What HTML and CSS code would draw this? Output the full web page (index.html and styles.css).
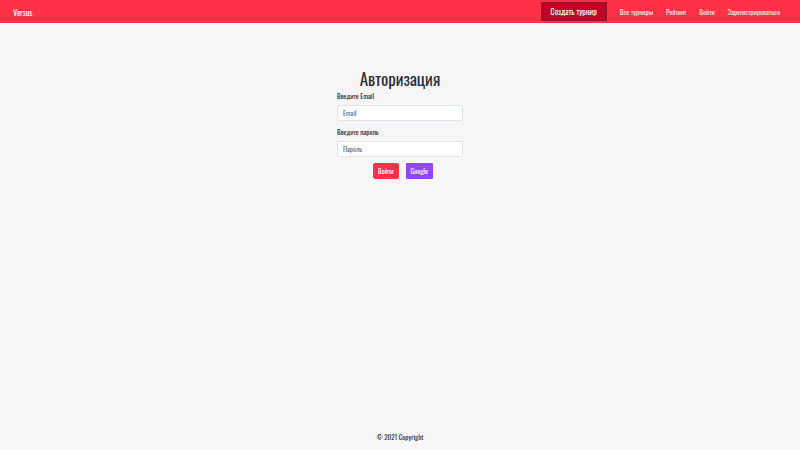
FILE: index.html
```html
<!DOCTYPE html>
<html lang="ru">
<head>
<meta charset="utf-8">
<meta name="viewport" content="width=device-width, initial-scale=1">
<title>Versus</title>
<link rel="stylesheet" href="styles.css">
</head>
<body>
<header class="navbar">
  <a class="brand" href="#">Versus</a>
  <nav class="nav">
    <a class="create" href="#">Создать турнир</a>
    <a class="nav-link" href="#">Все турниры</a>
    <a class="nav-link" href="#">Рейтинг</a>
    <a class="nav-link" href="#">Войти</a>
    <a class="nav-link" href="#">Зарегистрироваться</a>
  </nav>
</header>
<main class="main">
  <form class="login">
    <h1 class="title">Авторизация</h1>
    <div class="field">
      <label for="email">Введите Email</label>
      <input id="email" type="email" placeholder="Email">
    </div>
    <div class="field">
      <label for="password">Введите пароль</label>
      <input id="password" type="password" placeholder="Пароль">
    </div>
    <div class="actions">
      <button class="btn btn-login" type="submit">Войти</button>
      <button class="btn btn-google" type="button">Google</button>
    </div>
  </form>
</main>
<footer class="footer">© 2021 Copyright</footer>
</body>
</html>
```
FILE: styles.css
```css
* {
  box-sizing: border-box;
}

body {
  display: flex;
  flex-direction: column;
  min-height: 100vh;
  margin: 0;
  background: #f6f6f6;
  color: #2f2f3d;
  font-family: Oswald, "Liberation Sans Narrow", "Roboto Condensed", "Liberation Sans", sans-serif;
  font-size: 7px;
  line-height: 10px;
}

.navbar {
  display: flex;
  align-items: center;
  justify-content: space-between;
  padding: 2px 20px 2px 13px;
  background: #ff3148;
}

.brand,
.nav-link,
.create {
  color: #fff;
  text-decoration: none;
}

.brand {
  font-size: 8px;
}

.nav {
  display: flex;
  align-items: center;
  gap: 13px;
}

.nav-link {
  color: #ffe3e6;
}

.create {
  padding: 4px 9px;
  border: 1px solid #93142b;
  background: #bf0029;
  font-size: 8px;
  line-height: 9px;
}

.main {
  flex: 1;
  padding-top: 46px;
}

.login {
  width: 126px;
  margin: 0 auto;
}

.title {
  margin: 0 0 2px;
  font-size: 17px;
  font-weight: 400;
  line-height: 20px;
  text-align: center;
  white-space: nowrap;
}

.field {
  display: flex;
  flex-direction: column;
  gap: 4px;
  margin-bottom: 6px;
}

.field input {
  width: 100%;
  height: 16px;
  padding: 0 5px;
  border: 1px solid #e2e6ea;
  border-radius: 2px;
  background: #fff;
  color: #495057;
  font: inherit;
}

.field input::placeholder {
  color: #6c757d;
  opacity: 1;
}

.actions {
  display: flex;
  justify-content: center;
  gap: 7px;
  padding-left: 6px;
}

.btn {
  padding: 3px 5px;
  border: 0;
  border-radius: 2px;
  color: #fff;
  font: inherit;
}

.btn-login {
  background: #ff3148;
}

.btn-google {
  border-radius: 1px;
  background: #8f48ff;
}

.footer {
  padding: 8px;
  text-align: center;
}
```
